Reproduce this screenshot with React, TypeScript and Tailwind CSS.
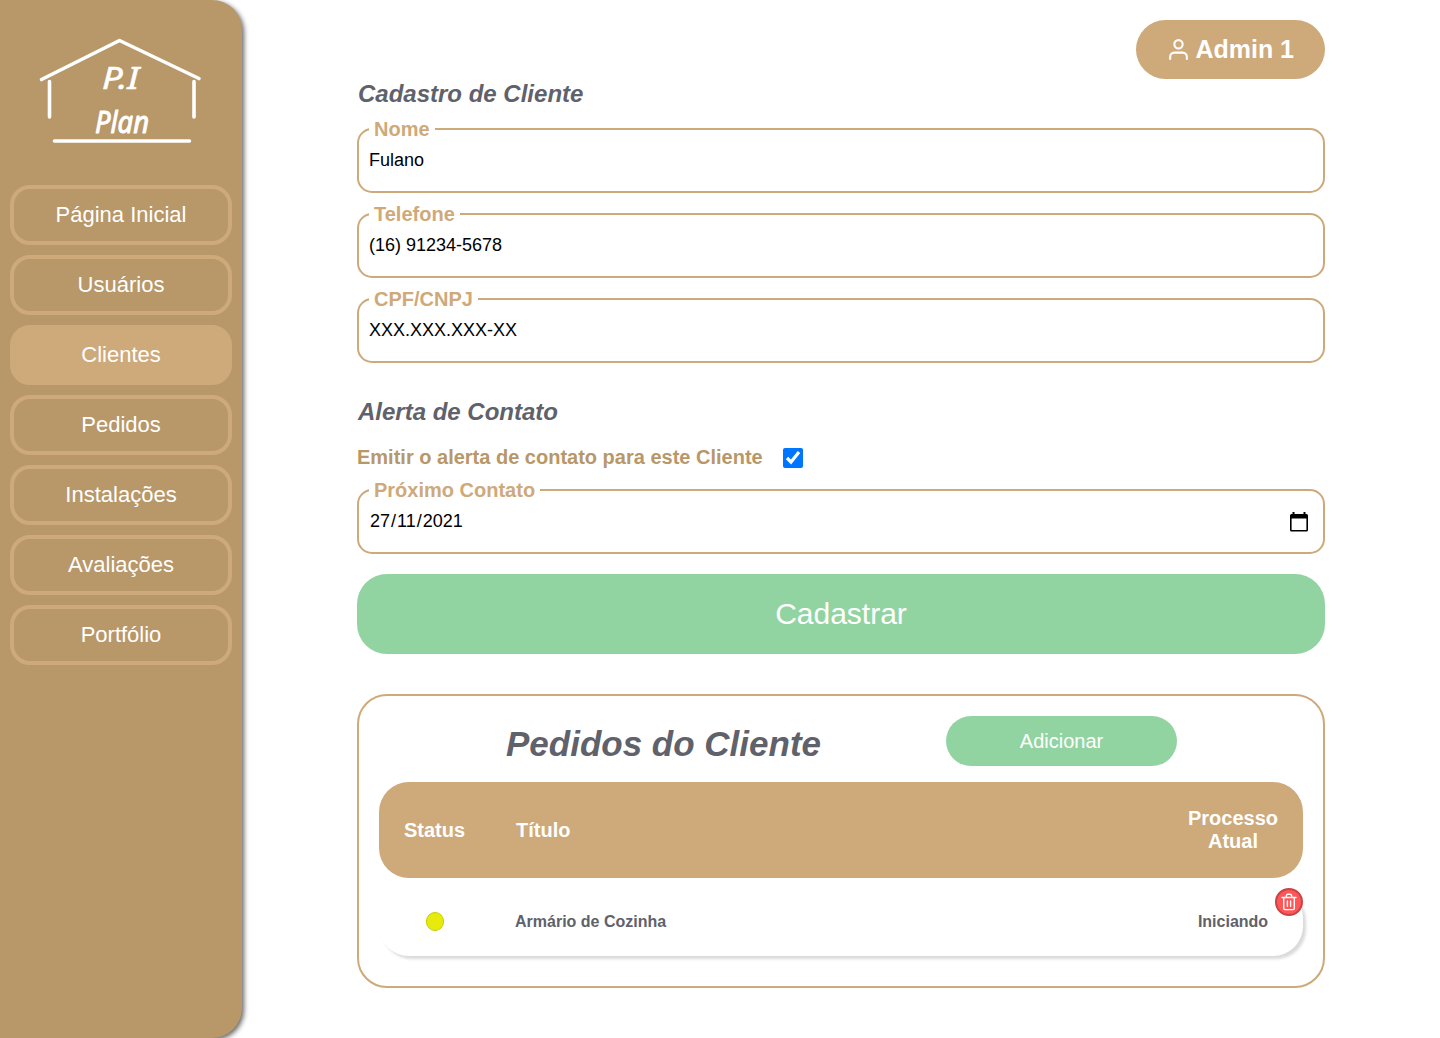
import type { ReactNode } from "react";
import { FiUser } from "react-icons/fi";

const NAV = ["Página Inicial", "Usuários", "Clientes", "Pedidos", "Instalações", "Avaliações", "Portfólio"];

function Logo() {
  return (
    <svg width="180" height="120" viewBox="30 30 180 120" fill="none" stroke="white" strokeWidth="3.6" strokeLinecap="round" strokeLinejoin="round" className="mt-[30px] ml-[30px]">
      <path d="M41.500 79.500L119.500 40.500L199 78.500M49.500 81.500V117M194 81.500V117M54.500 141H189.500" />
      <g fill="white" strokeWidth="0.6" fontFamily="'Noto Sans', sans-serif" fontStyle="italic">
        <text x="102" y="89" fontSize="31" textLength="37" lengthAdjust="spacingAndGlyphs">P.I</text>
        <text x="95" y="133" fontSize="31" strokeWidth="1" textLength="54" lengthAdjust="spacingAndGlyphs">Plan</text>
      </g>
    </svg>
  );
}

function Sidebar() {
  return (
    <aside className="h-[1038px] w-[242px] shrink-0 rounded-r-[30px] bg-[#b89769] shadow-[2px_2px_5px_#666]">
      <Logo />
      <nav className="mt-[35px] flex flex-col gap-[10px] px-[10px]">
        {NAV.map((item) => (
          <a
            key={item}
            className={`flex h-[60px] w-[222px] items-center justify-center rounded-[20px] border-4 border-[#cea97a] pb-[2px] text-[22px] leading-[25px] text-white ${item === "Clientes" ? "bg-[#cea97a]" : ""}`}
          >
            {item}
          </a>
        ))}
      </nav>
    </aside>
  );
}

function Field({ label, children }: { label: string; children: ReactNode }) {
  return (
    <fieldset className="h-[75px] rounded-[15px] border-2 border-[#cea97a] px-[10px]">
      <legend className="h-[22px] px-[5px] text-[20px] leading-[23px] font-bold text-[#cea97a]">{label}</legend>
      <div className="flex h-[40px] items-center justify-between text-[18px] leading-[20px] text-black">{children}</div>
    </fieldset>
  );
}

function CalendarIcon() {
  return (
    <svg width="20" height="20" viewBox="0 0 20 20" className="mt-px mr-[4px]">
      <path fillRule="evenodd" fill="black" d="M3.500 0H5.500V2h9V0H16.500V2H17.500Q19 2 19 3.500v14.500Q19 19.500 17.500 19.500h-15Q1 19.500 1 18V3.500Q1 2 2.500 2H3.500zM2.600 6.500v11.500h14.800V6.500z" />
    </svg>
  );
}

function TrashIcon() {
  return (
    <svg width="16" height="18" viewBox="0 0 16 18" fill="none" stroke="white" strokeWidth="1.400" strokeLinejoin="round" strokeLinecap="round">
      <path d="M1 4.500H15M2.700 4.500V15.300Q2.700 16.600 4 16.600H12Q13.300 16.600 13.300 15.300V4.500M5 4.300L5.500 2.300Q5.700 1.300 6.700 1.300H9.300Q10.300 1.300 10.500 2.300L11 4.300M6.400 8V13.300M9.600 8V13.300" />
    </svg>
  );
}

export default function App() {
  return (
    <div className="flex h-[1038px] w-[1440px] overflow-hidden bg-white font-['Liberation_Sans',Arial,sans-serif]">
      <Sidebar />
      <main className="ml-[115px] w-[968px]">
        <div className="mt-[20px] flex h-[59px] justify-end">
          <button className="flex items-center gap-[5px] rounded-[30px] bg-[#cea97a] px-[30px] text-[25px] leading-[29px] font-bold text-white">
            <FiUser size={25} />
            <span className="-ml-px mr-px">Admin 1</span>
          </button>
        </div>
        <h2 className="mt-[1px] mb-[10px] pl-px text-[24px] leading-[28px] font-bold text-[#5f616b] italic">Cadastro de Cliente</h2>
        <div className="flex flex-col gap-[10px]">
          <Field label="Nome">Fulano</Field>
          <Field label="Telefone">(16) 91234-5678</Field>
          <Field label="CPF/CNPJ">XXX.XXX.XXX-XX</Field>
        </div>
        <h2 className="mt-[35px] pl-px text-[24px] leading-[28px] font-bold text-[#5f616b] italic">Alerta de Contato</h2>
        <label className="mt-[20px] flex h-[23px] items-center gap-[20px] text-[20px] leading-[23px] font-bold text-[#b89769]">
          Emitir o alerta de contato para este Cliente
          <input type="checkbox" defaultChecked className="size-[20px]" />
        </label>
        <div className="mt-[10px]">
          <Field label="Próximo Contato">
            <span className="flex">
              <span className="px-px">27</span>/<span className="px-px">11</span>/<span className="px-px">2021</span>
            </span>
            <CalendarIcon />
          </Field>
        </div>
        <button className="mt-[20px] block h-[80px] w-full rounded-[30px] bg-[#91d4a1] pb-[2px] text-[30px] text-white">Cadastrar</button>

        <section className="mt-[40px] h-[294px] rounded-[30px] border-2 border-[#cea97a] px-[20px] pt-[20px]">
          <div className="flex h-[50px] items-center justify-evenly">
            <h1 className="mt-[6px] -mr-px pl-px text-[35px] leading-[40px] font-bold text-[#5f616b] italic">Pedidos do Cliente</h1>
            <button className="h-[50px] w-[231px] rounded-[30px] bg-[#91d4a1] text-[20px] text-white">Adicionar</button>
          </div>
          <div className="mt-[16px] grid h-[96px] grid-cols-[111px_1fr_140px] items-center rounded-[30px] bg-[#cea97a] text-[20px] leading-[23px] font-bold text-white">
            <span className="text-center">Status</span>
            <span className="pl-[26px]">Título</span>
            <span className="text-center">
              Processo
              <br />
              Atual
            </span>
          </div>
          <div className="relative mt-[10px] grid h-[68px] grid-cols-[111px_1fr_140px] items-center rounded-[30px] text-[16px] leading-[18px] font-bold text-[#5f616b] shadow-[3px_3px_3px_#dadada]">
            <span className="ml-[47px] mb-px h-[19px] w-[18px] rounded-full border border-[#c9cd08] bg-[#e6eb0b]" />
            <span className="pl-[25px]">Armário de Cozinha</span>
            <span className="text-center">Iniciando</span>
            <button className="absolute top-0 right-0 flex size-[28px] items-center justify-center rounded-full border-2 border-[#c94444] bg-[#ff5757]">
              <TrashIcon />
            </button>
          </div>
        </section>
      </main>
    </div>
  );
}
